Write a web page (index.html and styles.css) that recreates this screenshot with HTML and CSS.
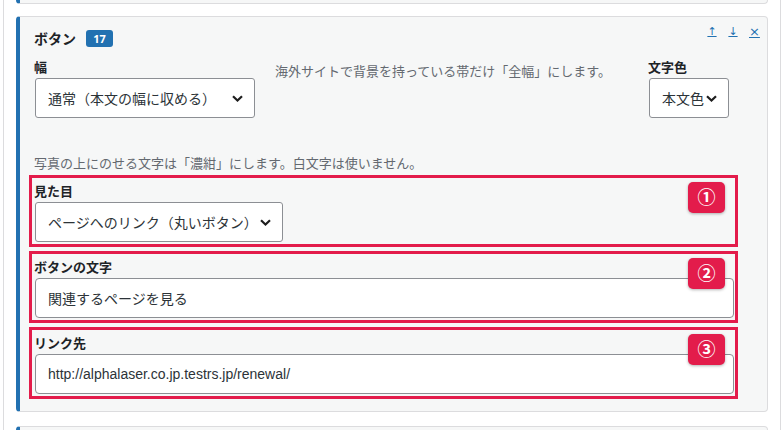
FILE: index.html
```html
<!DOCTYPE html>
<html lang="ja">
<head>
<meta charset="utf-8">
<title>ボタン</title>
<link rel="stylesheet" href="styles.css">
</head>
<body>
<div class="frame">
  <div class="card card-prev"></div>
  <div class="card card-main">
    <div class="head">
      <span class="title">ボタン</span>
      <span class="count">17</span>
      <div class="tools">
        <a class="tool" href="#">↑</a>
        <a class="tool" href="#">↓</a>
        <a class="tool tool-x" href="#">×</a>
      </div>
    </div>
    <div class="row">
      <div class="field">
        <div class="label">幅</div>
        <div class="select sel-width">
          <span>通常（本文の幅に収める）</span>
          <svg class="chev" width="11" height="7" viewBox="0 0 11 7"><path d="M1 1.2 L5.5 5.5 L10 1.2" fill="none" stroke="#1e1e1e" stroke-width="2.2"/></svg>
        </div>
      </div>
      <p class="desc">海外サイトで背景を持っている帯だけ「全幅」にします。</p>
      <div class="field field-color">
        <div class="label">文字色</div>
        <div class="select sel-color">
          <span>本文色</span>
          <svg class="chev" width="11" height="7" viewBox="0 0 11 7"><path d="M1 1.2 L5.5 5.5 L10 1.2" fill="none" stroke="#1e1e1e" stroke-width="2.2"/></svg>
        </div>
      </div>
    </div>
    <p class="note">写真の上にのせる文字は「濃紺」にします。白文字は使いません。</p>
    <div class="box">
      <div class="label">見た目</div>
      <div class="select sel-look">
        <span>ページへのリンク（丸いボタン）</span>
        <svg class="chev" width="11" height="7" viewBox="0 0 11 7"><path d="M1 1.2 L5.5 5.5 L10 1.2" fill="none" stroke="#1e1e1e" stroke-width="2.2"/></svg>
      </div>
      <span class="num">①</span>
    </div>
    <div class="box">
      <div class="label">ボタンの文字</div>
      <div class="input">関連するページを見る</div>
      <span class="num">②</span>
    </div>
    <div class="box">
      <div class="label">リンク先</div>
      <div class="input input-url">http://alphalaser.co.jp.testrs.jp/renewal/</div>
      <span class="num">③</span>
    </div>
  </div>
  <div class="card card-next"></div>
</div>
</body>
</html>
```
FILE: styles.css
```css
html, body {
  margin: 0;
  padding: 0;
  background: #ffffff;
}
body {
  font-family: "Noto Sans CJK JP", "Noto Sans", sans-serif;
  color: #1d2327;
  overflow: hidden;
}
.frame {
  margin-left: 3px;
  width: 778px;
  height: 430px;
  box-sizing: border-box;
  border-left: 1px solid #dcdcde;
  border-right: 1px solid #dcdcde;
  padding: 0 12px;
  overflow: hidden;
}
.card {
  border: 1px solid #dcdcde;
  border-left: 4px solid #2271b1;
  border-radius: 4px;
  background: #f6f7f7;
}
.card-prev {
  height: 3px;
  border-top: none;
  border-top-left-radius: 0;
  border-top-right-radius: 0;
  margin-bottom: 12px;
}
.card-main {
  position: relative;
  padding: 13px 29px 12px 14px;
}
.card-next {
  margin-top: 14px;
  height: 40px;
}
.head {
  display: flex;
  align-items: center;
  height: 17px;
  margin-right: -21px;
}
.title {
  font-size: 14px;
  font-weight: bold;
  line-height: 17px;
}
.count {
  margin-left: 10px;
  width: 27px;
  height: 17px;
  border-radius: 3px;
  background: #2271b1;
  color: #ffffff;
  font-family: "Noto Sans", sans-serif;
  font-size: 11px;
  font-weight: bold;
  line-height: 17px;
  text-align: center;
}
.tools {
  margin-left: auto;
  align-self: flex-start;
  margin-top: -5px;
  display: flex;
  gap: 11px;
}
.tool {
  color: #2271b1;
  font-family: "DejaVu Sans", sans-serif;
  font-size: 11px;
  line-height: 14px;
  text-decoration: underline;
  width: 10px;
  text-align: center;
}
.tool-x {
  font-size: 13px;
}
.row {
  display: flex;
  align-items: flex-start;
  margin-top: 11px;
}
.label {
  font-size: 13px;
  font-weight: bold;
  line-height: 17px;
  color: #1d2327;
}
.select, .input {
  box-sizing: border-box;
  height: 40px;
  margin: 3px 0 0 1px;
  border: 1px solid #8c8f94;
  border-radius: 3px;
  background: #ffffff;
  font-size: 14px;
  color: #2c3338;
  display: flex;
  align-items: center;
}
.select {
  justify-content: space-between;
  padding: 0 11px 0 12px;
}
.chev {
  display: block;
  flex: none;
}
.sel-width { width: 220px; }
.sel-color { width: 80px; }
.sel-look { width: 248px; }
.desc {
  margin: 3px 0 0 20px;
  font-size: 13px;
  line-height: 20px;
  color: #646970;
}
.field-color {
  margin-left: auto;
  margin-right: 9px;
}
.note {
  margin: 35px 0 2px 0;
  font-size: 13px;
  line-height: 20px;
  color: #646970;
}
.box {
  position: relative;
  margin: 0 0 4px -5px;
  border: 3px solid #e31c4b;
  padding: 4px 0 2px 2px;
}
.box:last-child {
  margin-bottom: 0;
}
.input {
  margin-right: 1px;
  padding: 0 12px;
  border-radius: 4px;
}
.input-url {
  font-family: "Liberation Sans", "Noto Sans CJK JP", sans-serif;
  font-size: 14px;
}
.num {
  position: absolute;
  top: 4px;
  right: 10px;
  width: 37px;
  height: 31px;
  border-radius: 5px;
  background: #e31c4b;
  box-shadow: 0 1px 3px rgba(0, 0, 0, 0.3);
  color: #ffffff;
  font-size: 18px;
  font-weight: bold;
  line-height: 29px;
  text-align: center;
}
```
